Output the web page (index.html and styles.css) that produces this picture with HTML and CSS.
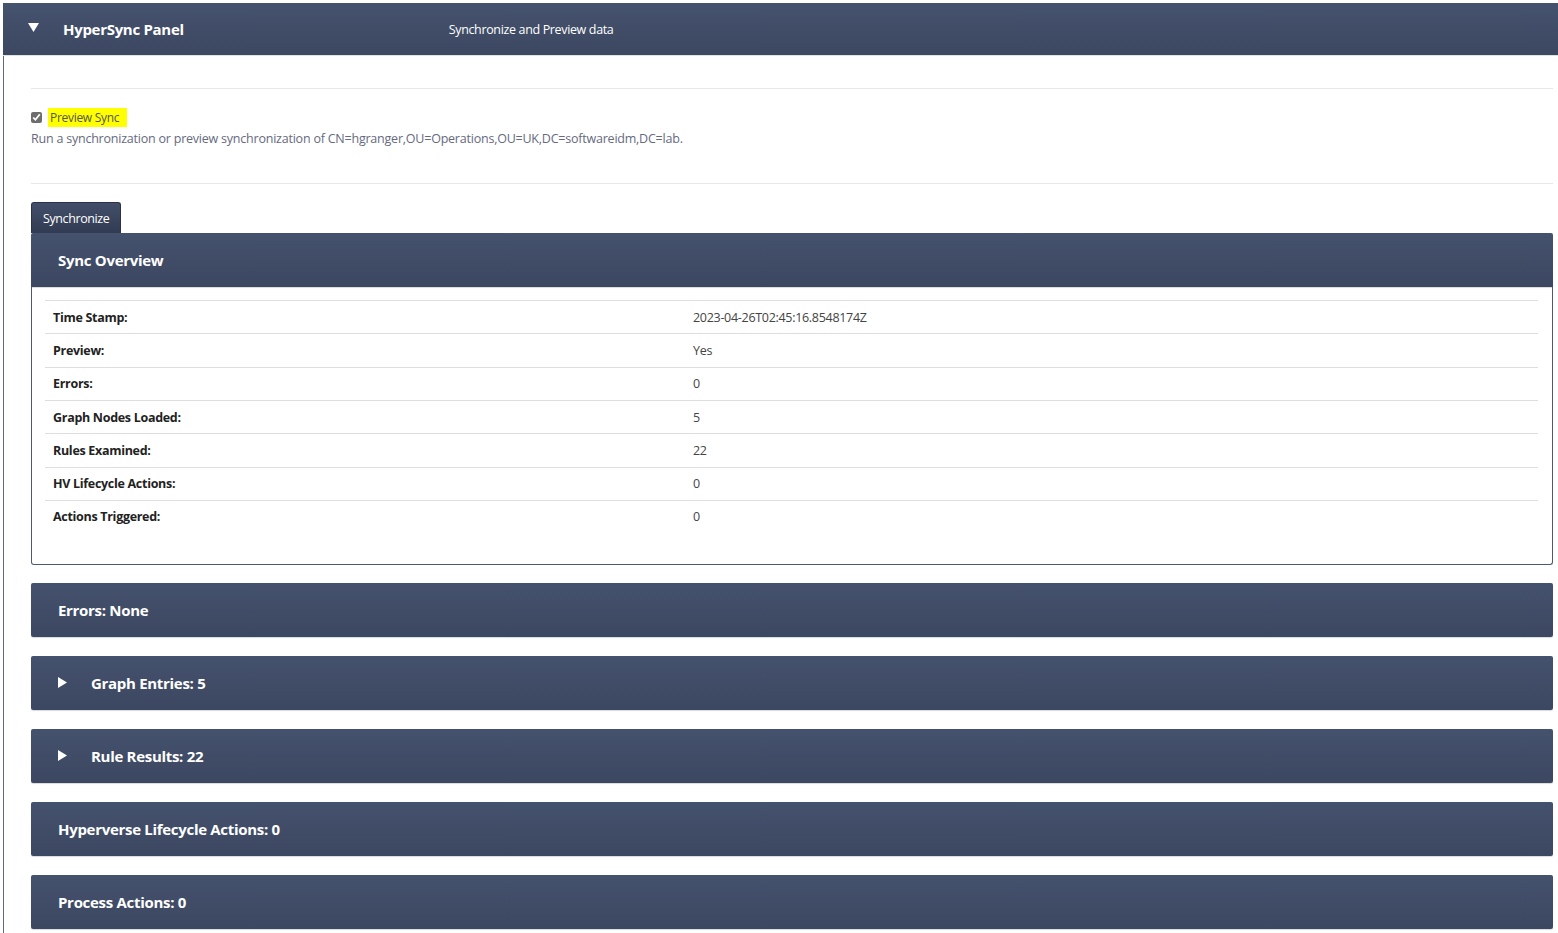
FILE: index.html
```html
<!DOCTYPE html>
<html lang="en">
<head>
  <meta charset="UTF-8" />
  <title>HyperSync Panel</title>
  <link rel="stylesheet" href="styles.css">
</head>
<body>
  <div class="panel-wrap">
    <!-- main header -->
    <div class="main-head">
      <svg class="caret-down" width="11" height="9" viewBox="0 0 11 9"><polygon points="0,0 11,0 5.5,9" fill="#fff"/></svg>
      <span class="main-title">HyperSync Panel</span>
      <span class="main-sub">Synchronize and Preview data</span>
    </div>

    <div class="content">
      <hr class="rule">
      <div class="option">
        <input type="checkbox" class="check" checked>
        <span class="hl">Preview Sync</span>
      </div>
      <p class="desc">Run a synchronization or preview synchronization of CN=hgranger,OU=Operations,OU=UK,DC=softwareidm,DC=lab.</p>
      <hr class="rule rule-2">

      <button class="sync-btn">Synchronize</button>

      <!-- overview -->
      <div class="box open">
        <div class="box-head">Sync Overview</div>
        <div class="box-body">
          <table class="stats">
            <tr><th>Time Stamp:</th><td>2023-04-26T02:45:16.8548174Z</td></tr>
            <tr><th>Preview:</th><td>Yes</td></tr>
            <tr><th>Errors:</th><td>0</td></tr>
            <tr><th>Graph Nodes Loaded:</th><td>5</td></tr>
            <tr><th>Rules Examined:</th><td>22</td></tr>
            <tr><th>HV Lifecycle Actions:</th><td>0</td></tr>
            <tr><th>Actions Triggered:</th><td>0</td></tr>
          </table>
        </div>
      </div>

      <div class="box"><div class="box-head">Errors: None</div></div>
      <div class="box"><div class="box-head"><svg class="caret-right" width="9" height="11" viewBox="0 0 9 11"><polygon points="0,0 9,5.5 0,11" fill="#fff"/></svg>Graph Entries: 5</div></div>
      <div class="box"><div class="box-head"><svg class="caret-right" width="9" height="11" viewBox="0 0 9 11"><polygon points="0,0 9,5.5 0,11" fill="#fff"/></svg>Rule Results: 22</div></div>
      <div class="box"><div class="box-head">Hyperverse Lifecycle Actions: 0</div></div>
      <div class="box"><div class="box-head">Process Actions: 0</div></div>
    </div>
  </div>
</body>
</html>
```

FILE: styles.css
```css
/* page */
body {
  margin: 3px 0 0 3px;
  font-family: "Open Sans", "Noto Sans", sans-serif;
  color: #333;
  background: #fff;
  overflow: hidden;
}
.panel-wrap {
  border-left: 1px solid #5d6a86;
  min-height: 940px;
}

/* top header */
.main-head {
  display: flex;
  align-items: center;
  height: 52px;
  margin-left: -1px;
  background: linear-gradient(#46536e, #3c4761);
  border-bottom: 1px solid #dfe5e0;
  color: #fff;
}
.caret-down {
  margin-left: 25px;
  margin-top: -4px;
}
.main-title {
  margin-left: 24px;
  font-size: 15px;
  font-weight: 700;
  letter-spacing: -0.3px;
}
.main-sub {
  margin-left: 265px;
  font-size: 12.5px;
  letter-spacing: -0.35px;
}

/* content area */
.content {
  padding: 32px 5px 0 27px;
}
.rule {
  margin: 0;
  border: 0;
  border-top: 1px solid #e8e8e8;
}
.rule-2 {
  margin-top: 36px;
}
.option {
  display: flex;
  align-items: center;
  margin-top: 19px;
  height: 18px;
}
.check {
  width: 11px;
  height: 11px;
  margin: 0 6px 0 0;
  accent-color: #6d6d6d;
}
.hl {
  background: #ffff00;
  color: #555;
  font-size: 12px;
  padding: 1px 8px 1px 2px;
  letter-spacing: -0.3px;
}
.desc {
  margin: 4px 0 0;
  font-size: 12.5px;
  color: #666a80;
  letter-spacing: -0.22px;
}

/* button */
.sync-btn {
  display: block;
  margin-top: 18px;
  height: 31px;
  padding: 0 11px;
  font-family: inherit;
  font-size: 12.5px;
  letter-spacing: -0.4px;
  color: #fff;
  background: linear-gradient(#434f69, #313b52);
  border: 1px solid #2a3347;
  border-bottom: 0;
  border-radius: 3px 3px 0 0;
}

/* collapsible boxes */
.box {
  margin-bottom: 19px;
}
.box.open {
  margin-bottom: 18px;
}
.box-head {
  display: flex;
  align-items: center;
  height: 54px;
  padding-left: 27px;
  background: linear-gradient(#45526d, #3c4761);
  border-radius: 2px;
  box-shadow: 0 1px 1px rgba(0, 0, 0, 0.15);
  color: #fff;
  font-size: 15px;
  font-weight: 700;
  letter-spacing: -0.3px;
}
.box.open .box-head {
  border-radius: 2px 2px 0 0;
}
.caret-right {
  margin-right: 24px;
}
.box-body {
  border: 1px solid #4d5873;
  border-top: 0;
  border-radius: 0 0 3px 3px;
  padding: 13px 14px 32px 13px;
}

/* overview table */
.stats {
  width: 100%;
  border-collapse: collapse;
  font-size: 12.5px;
}
.stats th, .stats td {
  height: 32.33px;
  padding: 0 8px;
  text-align: left;
  border-top: 1px solid #dedede;
  letter-spacing: -0.3px;
}
.stats th {
  width: 624px;
  color: #222;
}
.stats td {
  color: #444;
  font-weight: 400;
}
.stats tr:last-child th, .stats tr:last-child td {
  height: 31px;
}
```
